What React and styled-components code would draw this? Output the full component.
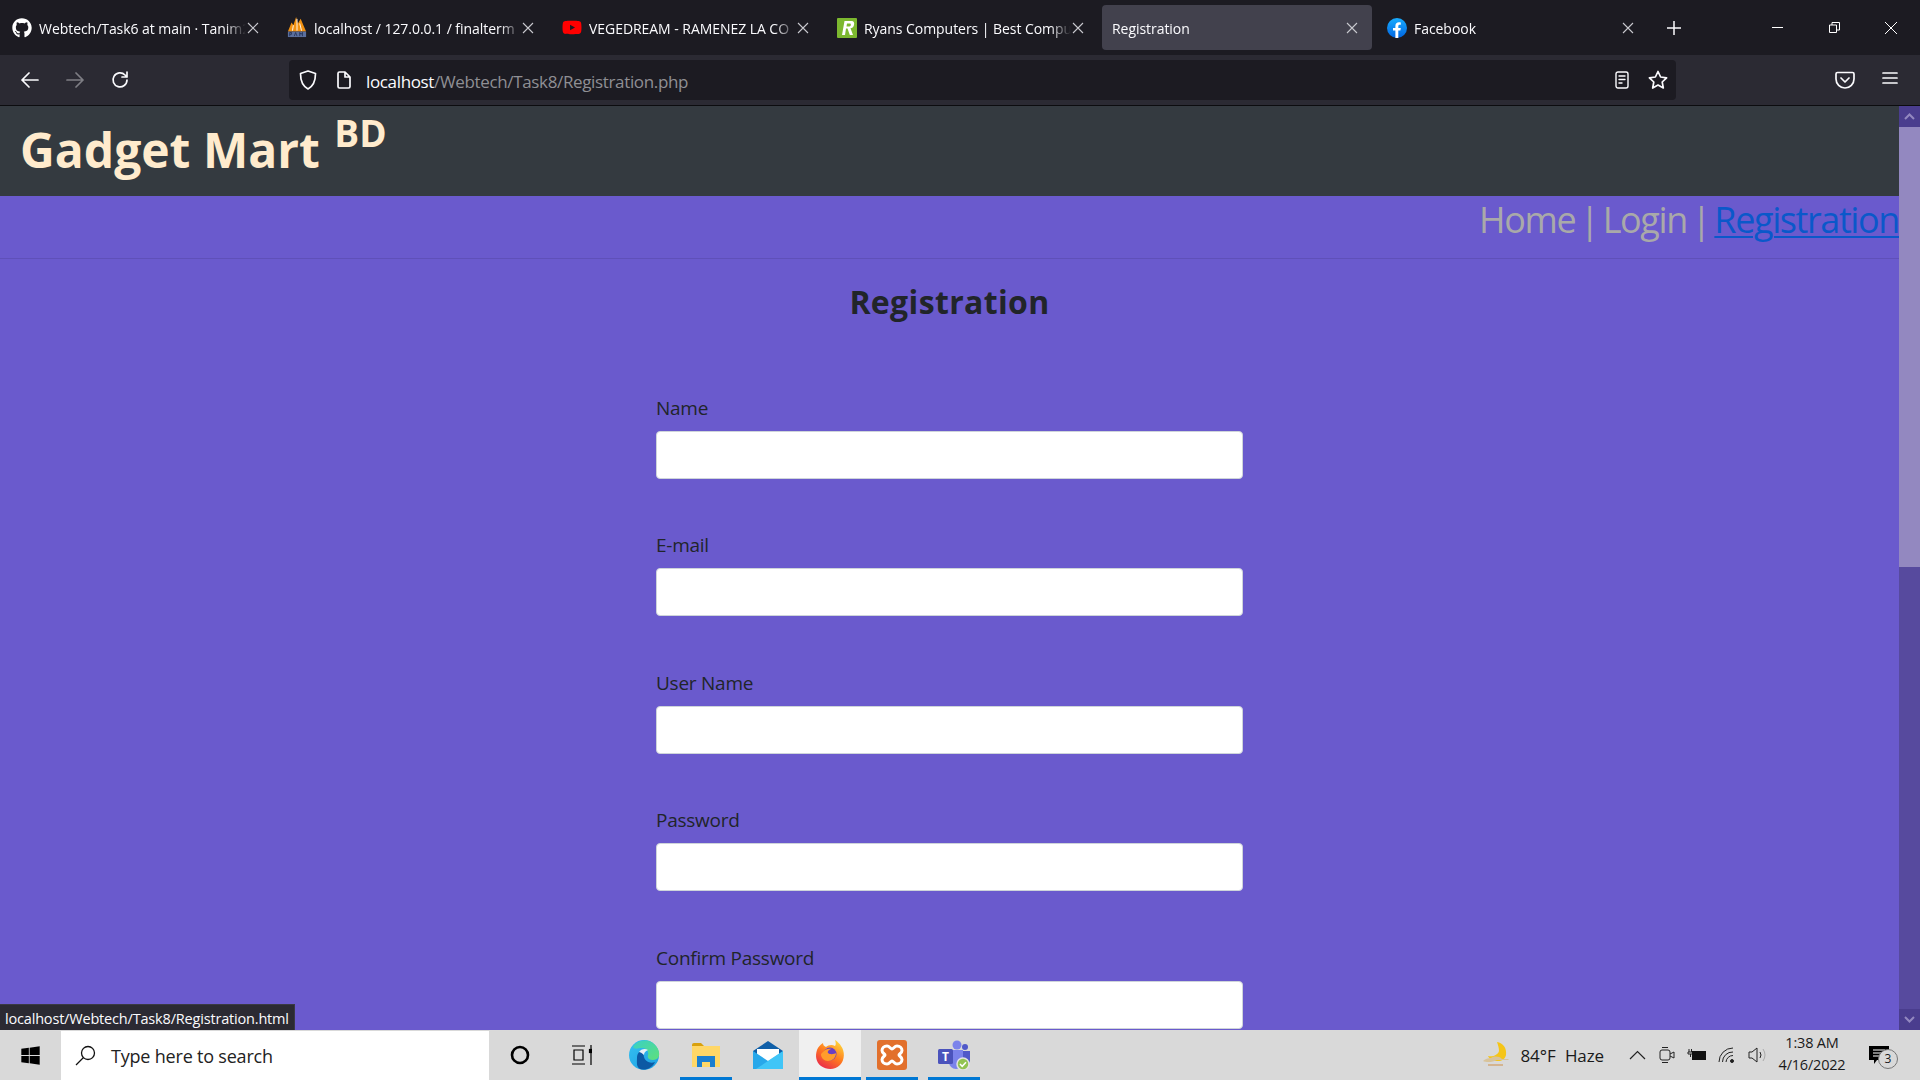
import React from 'react'
import styled, { createGlobalStyle } from 'styled-components'
import { FaGithub, FaYoutube, FaWindows } from 'react-icons/fa'

const Global = createGlobalStyle`
  * { box-sizing: border-box; }
  html, body { margin: 0; padding: 0; height: 100%; overflow: hidden; background: #6a5acd; }
  body { font-family: "Open Sans", "Noto Sans", sans-serif; }
`

const Screen = styled.div`
  width: 1920px;
  height: 1080px;
  display: flex;
  flex-direction: column;
  overflow: hidden;
  position: relative;
`

/* browser chrome */
const TabBar = styled.div`
  height: 55px;
  flex: none;
  background: #1c1b22;
  display: flex;
  padding: 5px 0 0 2px;
  color: #fbfbfe;
`
const Tab = styled.div`
  width: ${p => p.$active ? 270 : 275}px;
  height: 45px;
  flex: none;
  display: flex;
  align-items: center;
  padding: 0 ${p => p.$active ? 14 : 18}px 0 10px;
  margin-right: ${p => p.$active ? 5 : 0}px;
  gap: 7px;
  border-radius: 4px;
  background: ${p => p.$active ? '#42414d' : 'transparent'};
`
const TabTitle = styled.span`
  flex: 1;
  min-width: 0;
  overflow: hidden;
  white-space: nowrap;
  font-size: 14px;
  letter-spacing: -0.05px;
  padding-top: 1px;
  -webkit-mask-image: linear-gradient(to right, #000 90%, transparent 100%);
  mask-image: linear-gradient(to right, #000 90%, transparent 100%);
`
const FavSlot = styled.span`
  width: 20px;
  height: 20px;
  flex: none;
  display: flex;
  align-items: center;
  justify-content: center;
`
const TabClose = styled.svg`
  width: 12px;
  height: 12px;
  flex: none;
  margin-left: -6px;
  stroke: #c9c9cf;
  stroke-width: 1.1;
  fill: none;
`
const NewTab = styled.div`
  width: 40px;
  height: 45px;
  margin-left: 2px;
  display: flex;
  align-items: center;
  justify-content: center;
`
const WinButtons = styled.div`
  margin-left: auto;
  display: flex;
  height: 45px;
  align-items: center;
  padding-right: 1px;
`
const WinButton = styled.div`
  width: 56.5px;
  display: flex;
  justify-content: center;
`
const NavBar = styled.div`
  height: 51px;
  flex: none;
  background: #2b2a33;
  border-bottom: 1px solid #0c0c0f;
  display: flex;
  align-items: center;
  color: #fbfbfe;
  padding-left: 7px;
`
const NavButton = styled.div`
  width: 45px;
  display: flex;
  justify-content: center;
  opacity: ${p => p.$off ? 0.4 : 1};
`
const UrlBar = styled.div`
  width: 1387px;
  height: 40px;
  margin-left: 147px;
  background: #1c1b22;
  border-radius: 4px;
  display: flex;
  align-items: center;
  padding: 0 0 0 10px;
`
const PageIcon = styled.svg`
  margin-left: 19px;
  flex: none;
`
const UrlText = styled.div`
  margin-left: 14px;
  padding-top: 2px;
  font-size: 17px;
  letter-spacing: -0.35px;
  color: #fbfbfe;
  flex: 1;
  span { color: #8f8f94; }
`
const UrlIcon = styled.div`
  width: 36px;
  display: flex;
  justify-content: center;
`
const RightIcons = styled.div`
  display: flex;
  margin-left: 151px;
  gap: 9px;
`

/* page */
const Viewport = styled.div`
  flex: 1;
  min-height: 0;
  display: flex;
  position: relative;
`
const Page = styled.div`
  flex: 1;
  min-width: 0;
  background: #6a5acd;
  overflow: hidden;
`
const Brand = styled.header`
  height: 90px;
  background: #343a40;
  color: #ffebcd;
  padding: 0 20px;
  font-weight: 700;
  font-size: 48px;
  line-height: 87px;
  white-space: nowrap;
  sup {
    font-size: 37px;
    line-height: 0;
    position: relative;
    top: -21px;
    vertical-align: baseline;
    margin-left: 2px;
    letter-spacing: 0;
  }
`
const Menu = styled.nav`
  height: 63px;
  border-bottom: 1px solid #5f50b9;
  text-align: right;
  font-size: 36px;
  line-height: 48px;
  letter-spacing: -1.4px;
  word-spacing: -3.4px;
  color: #a9a9a9;
  white-space: nowrap;
  a { color: #0a58ca; text-decoration: underline; text-underline-offset: 3px; text-decoration-thickness: 2px; }
`
const Title = styled.h2`
  margin: 22px 0 0;
  text-align: center;
  font-size: 32px;
  line-height: 42px;
  font-weight: 700;
  letter-spacing: 0.35px;
  color: #212529;
`
const Form = styled.form`
  width: 587px;
  margin: 70.5px auto 0;
  display: flex;
  flex-direction: column;
  gap: 52.6px;
`
const Field = styled.div`
  display: flex;
  flex-direction: column;
`
const Label = styled.label`
  font-size: 19px;
  line-height: 28px;
  letter-spacing: -0.25px;
  color: #212529;
  margin-bottom: 9px;
`
const Input = styled.input`
  height: 48px;
  width: 100%;
  background: #fff;
  border: 1px solid #ced4da;
  border-radius: 4px;
  outline: none;
`

/* scrollbar */
const Scroll = styled.div`
  width: 21px;
  flex: none;
  background: #574a9e;
  display: flex;
  flex-direction: column;
  justify-content: space-between;
`
const ScrollTop = styled.div`
  display: flex;
  flex-direction: column;
`
const ScrollBtn = styled.div`
  height: 21px;
  flex: none;
  background: #4a3d8e;
  display: flex;
  align-items: center;
  justify-content: center;
`
const Thumb = styled.div`
  height: 440px;
  flex: none;
  background: #9388c0;
`

const StatusTip = styled.div`
  position: absolute;
  left: 0;
  bottom: 0;
  height: 26px;
  padding: 1px 5px 0;
  background: #2b2a33;
  border: 1px solid #3a3944;
  border-left: 0;
  border-bottom: 0;
  color: #fbfbfe;
  font-size: 14.5px;
  line-height: 26px;
  letter-spacing: -0.18px;
  white-space: nowrap;
`

/* taskbar */
const Taskbar = styled.div`
  height: 50px;
  flex: none;
  background: #d9d9d9;
  display: flex;
  align-items: stretch;
  color: #1a1a1a;
`
const StartBtn = styled.div`
  width: 61px;
  display: flex;
  align-items: center;
  justify-content: center;
`
const SearchBox = styled.div`
  width: 428px;
  height: 49px;
  margin-top: 1px;
  background: #fff;
  display: flex;
  align-items: center;
  padding-left: 14px;
  gap: 15px;
  font-size: 18px;
  letter-spacing: -0.2px;
  color: #222;
`
const TaskIcon = styled.div`
  width: 62px;
  flex: none;
  display: flex;
  align-items: center;
  justify-content: center;
  position: relative;
  background: ${p => p.$on ? '#f0f0f0' : 'transparent'};
  ${p => p.$line && `
    &::after {
      content: '';
      position: absolute;
      left: ${p.$on ? 0 : 5}px;
      right: ${p.$on ? 0 : 5}px;
      bottom: 0;
      height: 3px;
      background: #0078d4;
    }
  `}
`
const Tray = styled.div`
  margin-left: auto;
  display: flex;
  align-items: center;
  position: relative;
  padding-right: 19px;
`
const Weather = styled.div`
  font-size: 17px;
  letter-spacing: -0.1px;
  margin-left: 8px;
  margin-right: 18px;
  word-spacing: 5px;
  white-space: nowrap;
`
const TrayIcon = styled.div`
  width: 30px;
  display: flex;
  justify-content: center;
`
const Clock = styled.div`
  width: 90px;
  text-align: center;
  font-size: 14.5px;
  line-height: 22px;
  letter-spacing: -0.2px;
  margin-left: -5px;
  padding-bottom: 2px;
`
const Notify = styled.div`
  width: 44px;
  display: flex;
  justify-content: center;
  position: relative;
`
const NotifyCount = styled.span`
  position: absolute;
  right: 3px;
  bottom: -5px;
  width: 20px;
  height: 20px;
  border-radius: 50%;
  background: #d9d9d9;
  border: 1px solid #777;
  font-size: 12px;
  line-height: 18px;
  text-align: center;
`

const Close = () => (
  <TabClose viewBox="0 0 12 12"><path d="M1 1l10 10M11 1L1 11" /></TabClose>
)

const PmaIcon = () => (
  <svg width="22" height="23" viewBox="0 0 22 23">
    <path d="M1 16L5 6l2 3 3-9 2 7 3-5 6 14z" fill="#f29111" />
    <path d="M6 15l1-6M11 15V2M16 15l-2-8" stroke="#fff" strokeWidth="1" />
    <rect x="1" y="16" width="20" height="6" fill="#5a6f9e" />
    <path d="M3 21v-4h2v2H3M8 21l1.500-4 1.500 4M14 21v-4l1.500 2 1.500-2v4" stroke="#1d2a4d" strokeWidth="0.8" fill="none" />
  </svg>
)
const RyansIcon = () => (
  <svg width="20" height="20" viewBox="0 0 20 20">
    <rect width="20" height="20" rx="1" fill="#7cb82f" />
    <path d="M5 17L7.500 3h7c2.500 0 3 2 2.500 4-.5 2.300-2 3-3.500 3.300L16 17h-3.200l-2.300-6.400H9L8 17zM9.500 8.400h3c1.500 0 2-2.900.3-2.900H10z" fill="#fff" />
  </svg>
)
const FbIcon = () => (
  <svg width="20" height="20" viewBox="0 0 20 20">
    <defs>
      <linearGradient id="fb" x1="0" y1="0" x2="0" y2="1">
        <stop offset="0" stopColor="#18acfe" />
        <stop offset="1" stopColor="#0165e1" />
      </linearGradient>
    </defs>
    <circle cx="10" cy="10" r="10" fill="url(#fb)" />
    <path d="M8.400 20v-7.400H6V10h2.400V8c0-2.400 1.400-3.700 3.500-3.700.9 0 1.900.2 1.900.2v2.200h-1.100c-1.100 0-1.400.7-1.400 1.400V10h2.500l-.4 2.600h-2.100V20z" fill="#fff" />
  </svg>
)

const iconLine = { fill: 'none', stroke: '#fbfbfe', strokeWidth: 1.7, strokeLinecap: 'round', strokeLinejoin: 'round' }

const EdgeIcon = () => (
  <svg width="32" height="32" viewBox="0 0 32 32">
    <defs>
      <linearGradient id="edgeA" x1="0" y1="0" x2="1" y2="1">
        <stop offset="0" stopColor="#35c1f1" />
        <stop offset="1" stopColor="#1b9de2" />
      </linearGradient>
      <linearGradient id="edgeB" x1="0" y1="0" x2="1" y2="1">
        <stop offset="0" stopColor="#3ad0c5" />
        <stop offset="1" stopColor="#5fe07a" />
      </linearGradient>
    </defs>
    <circle cx="16" cy="16" r="15" fill="url(#edgeA)" />
    <path d="M5 8C9 0 24-2 30 10c3 7 0 11-5 11-4 0-6-2-5-5 1-3-1-7-6-7-4 0-7 2-9-1z" fill="url(#edgeB)" />
    <path d="M9 19c0-6 5-10 10-8-3 1-4 4-3 7 1 4 6 7 11 5-3 6-9 9-15 7C8 28 9 22 9 19z" fill="#0c59a4" />
    <path d="M11 13c2-3 6-4 9-2-3 1-4 3-4 5-2-2-4-3-5-3z" fill="#fff" opacity="0.9" />
  </svg>
)
const FolderIcon = () => (
  <svg width="28" height="25" viewBox="0 0 28 25">
    <path d="M0 2q0-2 2-2h7l3 3H0z" fill="#d9a10e" />
    <rect x="0" y="3" width="28" height="21" fill="#ffd767" />
    <path d="M5 24V13h18v11h-5v-5h-8v5z" fill="#1b7fd0" />
  </svg>
)
const MailIcon = () => (
  <svg width="30" height="28" viewBox="0 0 30 28">
    <path d="M15 0l15 10v18H0V10z" fill="#0f5fa8" />
    <path d="M4 8h22v9l-11 5-11-5z" fill="#fff" />
    <path d="M0 10l15 10 15-10v18H0z" fill="#28a8ea" />
    <path d="M30 10v18H3z" fill="#50d9ff" opacity="0.6" />
  </svg>
)
const FirefoxIcon = () => (
  <svg width="30" height="30" viewBox="0 0 30 30">
    <defs>
      <linearGradient id="ffA" x1="0.8" y1="0" x2="0.2" y2="1">
        <stop offset="0" stopColor="#ffdc3c" />
        <stop offset="0.5" stopColor="#ff7a1f" />
        <stop offset="1" stopColor="#e8254e" />
      </linearGradient>
    </defs>
    <path d="M2 10c-2 6-1 12 4 16 6 4 14 4 19-1 5-5 5-14 1-19-1-2-4-5-6-6 1 3 1 5 0 6-3-2-7-1-9 1-2-1-3-2-3-4C5 5 3 7 2 10z" fill="url(#ffA)" />
    <circle cx="15" cy="14" r="6.500" fill="#6a3fc4" />
    <path d="M8 12c2-3 6-4 9-3-2 0-5 2-4 4 2 2 7 1 8 0 0 5-4 8-8 8-4 0-7-3-7-7z" fill="#ff9d2b" />
  </svg>
)
const XamppIcon = () => (
  <svg width="30" height="30" viewBox="0 0 30 30">
    <rect width="30" height="30" rx="3" fill="#e2702c" />
    <path d="M10 6c2.500 0 3.500 3 5 3s2.500-3 5-3c3 0 5 2 5 4.500 0 2.500-3 3.500-3 4.500s3 2 3 4.500c0 2.500-2 4.500-5 4.500-2.500 0-3.500-3-5-3s-2.500 3-5 3c-3 0-5-2-5-4.500C5 17 8 16 8 15s-3-2-3-4.500C5 8 7 6 10 6z" fill="none" stroke="#fff" strokeWidth="3" />
  </svg>
)
const TeamsIcon = () => (
  <svg width="33" height="30" viewBox="0 0 33 30">
    <circle cx="19" cy="5" r="4.500" fill="#7b83eb" />
    <circle cx="27" cy="7" r="3" fill="#5059c9" />
    <path d="M21 11h11v9a5 5 0 0 1-10 0z" fill="#5059c9" />
    <path d="M11 10h14v12a7 7 0 0 1-14 0z" fill="#7b83eb" />
    <rect x="0" y="9" width="15" height="15" rx="1.500" fill="#4b53bc" />
    <text x="7.500" y="21" textAnchor="middle" fontSize="12" fontWeight="700" fill="#fff" fontFamily="Open Sans">T</text>
    <circle cx="25" cy="24" r="6" fill="#92c353" stroke="#e3e3e3" strokeWidth="1.500" />
    <path d="M22 24l2.200 2.300 3.800-4" fill="none" stroke="#fff" strokeWidth="1.500" />
  </svg>
)
const MoonIcon = () => (
  <svg width="30" height="26" viewBox="0 0 30 26">
    <path d="M15 0c6 1 10 6 9 13-1 4-4 6-8 6-5 0-9-2-10-5 5 1 10-1 11-5 0-3-1-6-2-9z" fill="#f5c518" />
    <path d="M1 19c2-2 5-3 8-3 3-2 8-2 11 1h6c1 0 1 1 0 1H15c-4 2-10 3-14 1z" fill="#d8c39a" />
    <path d="M6 23h15" stroke="#d2a777" strokeWidth="1.500" />
  </svg>
)

const pageFields = ['Name', 'E-mail', 'User Name', 'Password', 'Confirm Password']

export default function App() {
  return (
    <Screen>
      <Global />
      <TabBar>
        <Tab>
          <FavSlot><FaGithub size={20} color="#fff" /></FavSlot>
          <TabTitle>Webtech/Task6 at main · Tanim2</TabTitle>
          <Close />
        </Tab>
        <Tab>
          <FavSlot><PmaIcon /></FavSlot>
          <TabTitle>localhost / 127.0.0.1 / finalterm</TabTitle>
          <Close />
        </Tab>
        <Tab>
          <FavSlot><FaYoutube size={21} color="#f00" /></FavSlot>
          <TabTitle>VEGEDREAM - RAMENEZ LA CO</TabTitle>
          <Close />
        </Tab>
        <Tab>
          <FavSlot><RyansIcon /></FavSlot>
          <TabTitle>Ryans Computers | Best Compu</TabTitle>
          <Close />
        </Tab>
        <Tab $active>
          <TabTitle>Registration</TabTitle>
          <Close />
        </Tab>
        <Tab>
          <FavSlot><FbIcon /></FavSlot>
          <TabTitle>Facebook</TabTitle>
          <Close />
        </Tab>
        <NewTab>
          <svg width="14" height="14" viewBox="0 0 14 14" stroke="#fbfbfe" strokeWidth="1.500"><path d="M7 0v14M0 7h14" /></svg>
        </NewTab>
        <WinButtons>
          <WinButton>
            <svg width="11" height="11" viewBox="0 0 11 11" stroke="#fff"><path d="M0 5.500h11" /></svg>
          </WinButton>
          <WinButton>
            <svg width="11" height="11" viewBox="0 0 11 11" fill="none" stroke="#fff"><path d="M.5 3h7v7.500h-7zM3 3V.5h7.500V8H8" /></svg>
          </WinButton>
          <WinButton>
            <svg width="12" height="12" viewBox="0 0 12 12" stroke="#fff"><path d="M0 0l12 12M12 0L0 12" /></svg>
          </WinButton>
        </WinButtons>
      </TabBar>

      <NavBar>
        <NavButton>
          <svg width="18" height="18" viewBox="0 0 18 18" {...iconLine}><path d="M17 9H1M8 2L1 9l7 7" /></svg>
        </NavButton>
        <NavButton $off>
          <svg width="18" height="18" viewBox="0 0 18 18" {...iconLine}><path d="M1 9h16M10 2l7 7-7 7" /></svg>
        </NavButton>
        <NavButton>
          <svg width="18" height="18" viewBox="0 0 18 18" {...iconLine}><path d="M16 9a7 7 0 1 1-2-5l2 2M16 1v5h-5" /></svg>
        </NavButton>
        <UrlBar>
          <svg width="18" height="20" viewBox="0 0 18 20" {...iconLine}><path d="M9 1l7.500 2.500c0 8-2 12.500-7.500 15.500C3.500 16 1.500 11.500 1.500 3.500z" /></svg>
          <PageIcon width="16" height="18" viewBox="0 0 16 18" {...iconLine}><path d="M2 2.500q0-1.500 1.500-1.500H9l5 5v9.500q0 1.500-1.500 1.500h-9Q2 17 2 15.500zM9 1v5h5" /></PageIcon>
          <UrlText>localhost<span>/Webtech/Task8/Registration.php</span></UrlText>
          <UrlIcon>
            <svg width="14" height="18" viewBox="0 0 14 18" {...iconLine} strokeWidth="1.400"><rect x="1" y="1" width="12" height="16" rx="2" /><path d="M4 5h6M4 8.500h6M4 12h3" /></svg>
          </UrlIcon>
          <UrlIcon>
            <svg width="20" height="20" viewBox="0 0 20 20" {...iconLine}><path d="M10 1.500l2.600 5.500 6 .8-4.400 4.200 1.100 6L10 15.100 4.700 18l1.100-6L1.400 7.800l6-.8z" /></svg>
          </UrlIcon>
        </UrlBar>
        <RightIcons>
          <UrlIcon>
            <svg width="20" height="18" viewBox="0 0 20 18" {...iconLine}><path d="M2.500 1.500h15q1.500 0 1.500 1.500v5a9 9 0 0 1-18 0V3q0-1.500 1.500-1.500zM6 7l4 4 4-4" /></svg>
          </UrlIcon>
          <UrlIcon>
            <svg width="16" height="14" viewBox="0 0 16 14" {...iconLine}><path d="M1 2h14M1 7h14M1 12h14" /></svg>
          </UrlIcon>
        </RightIcons>
      </NavBar>

      <Viewport>
        <Page>
          <Brand>Gadget Mart <sup>BD</sup></Brand>
          <Menu>Home | Login | <a href="#reg">Registration</a></Menu>
          <Title>Registration</Title>
          <Form>
            {pageFields.map(name => (
              <Field key={name}>
                <Label>{name}</Label>
                <Input type="text" />
              </Field>
            ))}
          </Form>
        </Page>
        <Scroll>
          <ScrollTop>
            <ScrollBtn>
              <svg width="11" height="7" viewBox="0 0 11 7" fill="none" stroke="#9388c0" strokeWidth="2"><path d="M1 6l4.500-4.500L10 6" /></svg>
            </ScrollBtn>
            <Thumb />
          </ScrollTop>
          <ScrollBtn>
            <svg width="11" height="7" viewBox="0 0 11 7" fill="none" stroke="#9388c0" strokeWidth="2"><path d="M1 1l4.500 4.500L10 1" /></svg>
          </ScrollBtn>
        </Scroll>
        <StatusTip>localhost/Webtech/Task8/Registration.html</StatusTip>
      </Viewport>

      <Taskbar>
        <StartBtn><FaWindows size={21} color="#000" /></StartBtn>
        <SearchBox>
          <svg width="21" height="21" viewBox="0 0 21 21" fill="none" stroke="#111" strokeWidth="1.300"><circle cx="13" cy="8" r="6.500" /><path d="M8.500 12.500L1 20" /></svg>
          Type here to search
        </SearchBox>
        <TaskIcon>
          <svg width="20" height="20" viewBox="0 0 20 20" fill="none" stroke="#000" strokeWidth="2.600"><circle cx="10" cy="10" r="8" /></svg>
        </TaskIcon>
        <TaskIcon>
          <svg width="20" height="20" viewBox="0 0 20 20" fill="none" stroke="#000" strokeWidth="1.200"><path d="M0 1h13M0 19h13M2 5h9v10H2zM19 0v4M19 8v12" /><rect x="17.500" y="4.500" width="3" height="3" fill="#000" /></svg>
        </TaskIcon>
        <TaskIcon><EdgeIcon /></TaskIcon>
        <TaskIcon $line><FolderIcon /></TaskIcon>
        <TaskIcon><MailIcon /></TaskIcon>
        <TaskIcon $on $line><FirefoxIcon /></TaskIcon>
        <TaskIcon $line><XamppIcon /></TaskIcon>
        <TaskIcon $line><TeamsIcon /></TaskIcon>
        <Tray>
          <MoonIcon />
          <Weather>84°F Haze</Weather>
          <TrayIcon>
            <svg width="17" height="10" viewBox="0 0 17 10" fill="none" stroke="#222" strokeWidth="1.200"><path d="M1 9l7.500-7.500L16 9" /></svg>
          </TrayIcon>
          <TrayIcon>
            <svg width="16" height="20" viewBox="0 0 16 20" fill="none" stroke="#222"><rect x="1" y="5" width="10" height="10" rx="2" /><path d="M11 9l4-2v6l-4-2M3 2.500h6M3 17.500h6" /></svg>
          </TrayIcon>
          <TrayIcon>
            <svg width="20" height="12" viewBox="0 0 20 12"><path d="M2 0v3M4.500 0v3M1 3h5v2H1zM3.500 5v3" stroke="#222" fill="none" /><rect x="5" y="2" width="14" height="9" fill="#111" /></svg>
          </TrayIcon>
          <TrayIcon>
            <svg width="18" height="16" viewBox="0 0 18 16" fill="none" stroke="#222"><path d="M1 15A14 14 0 0 1 15 1M4.500 15A10 10 0 0 1 15 5M8 15a7 7 0 0 1 7-6.500" /><circle cx="14" cy="14" r="1.500" fill="#222" /></svg>
          </TrayIcon>
          <TrayIcon>
            <svg width="19" height="16" viewBox="0 0 19 16" fill="none" stroke="#222"><path d="M1 5h3l5-4v14l-5-4H1zM12 5q2 3 0 6" /><path d="M15 2q4 6 0 12" stroke="#aaa" /></svg>
          </TrayIcon>
          <Clock>1:38 AM<br />4/16/2022</Clock>
          <Notify>
            <svg width="20" height="18" viewBox="0 0 20 18"><path d="M0 0h20v14H8l-3 4v-4H0z" fill="#000" /><path d="M4 4h12M4 7h12M4 10h8" stroke="#fff" /></svg>
            <NotifyCount>3</NotifyCount>
          </Notify>
        </Tray>
      </Taskbar>
    </Screen>
  )
}
